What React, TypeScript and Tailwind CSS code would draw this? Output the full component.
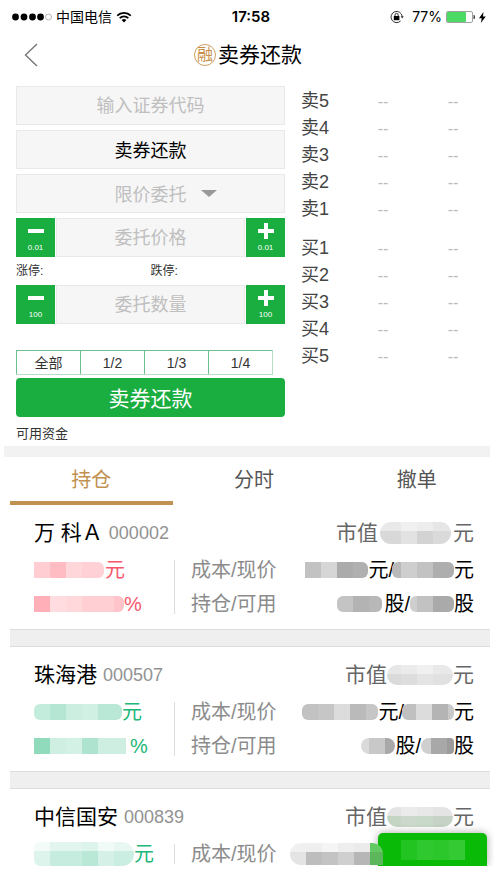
import React, { useState } from 'react';

type Cell = [width: number, color: string];

interface MosaicProps {
  cells: Cell[];
  top?: Cell[];
  height?: number;
  className?: string;
}

// Hides a private amount behind a strip of coloured blocks
const Mosaic: React.FC<MosaicProps> = ({ cells, top, height = 16, className = '' }) => {
  const topHeight = top ? 9 : 0;
  const draw = (row: Cell[], y: number, h: number) => {
    let x = 0;
    return row.map(([w, color], i) => {
      const rect = <rect key={`${y}-${i}`} x={x} y={y} width={w} height={h} fill={color} />;
      x += w;
      return rect;
    });
  };
  const width = cells.reduce((sum, cell) => sum + cell[0], 0);
  return (
    <svg width={width} height={height} shapeRendering="crispEdges" className={`shrink-0 ${className}`} aria-hidden="true">
      {top && draw(top, 0, topHeight)}
      {draw(cells, topHeight, height - topHeight)}
    </svg>
  );
};

const StatusBar: React.FC = () => (
  <div className="grid h-[34px] grid-cols-[1fr_auto_1fr] items-center pr-2 pl-3 font-['Inter','Noto_Sans_CJK_SC',sans-serif] text-sm text-black">
    <div className="flex items-center gap-1">
      <svg width="40" height="8" viewBox="0 0 40 8" aria-hidden="true">
        <circle cx="3.5" cy="4" r="3.4" />
        <circle cx="12" cy="4" r="3.4" />
        <circle cx="20.5" cy="4" r="3.4" />
        <circle cx="28.5" cy="4" r="3.4" />
        <circle cx="36.5" cy="4" r="3" fill="none" stroke="#999" strokeWidth="0.7" />
      </svg>
      <span>中国电信</span>
      <svg width="16" height="12" viewBox="0 0 16 12" fill="none" stroke="#000" strokeWidth="1.8" aria-hidden="true">
        <path d="M1.2 4.6a9.6 9.6 0 0 1 13.6 0" />
        <path d="M3.7 7.2a6.1 6.1 0 0 1 8.6 0" />
        <path d="M5.6 9.1a3.4 3.4 0 0 1 4.8 0L8 11.5z" fill="#000" stroke="none" />
      </svg>
    </div>
    <span className="pl-1 text-[15px] font-semibold">17:58</span>
    <div className="flex items-center justify-end">
      <svg width="14" height="14" viewBox="0 0 14 14" fill="none" stroke="#333" strokeWidth="1" className="mr-2" aria-hidden="true">
        <path d="M10.6 11A5.6 5.6 0 1 1 12.2 6.4" />
        <path d="M10.6 6.2h3.2L12.2 8.4z" fill="#333" stroke="none" />
        <path d="M5 6.3V5a1.6 1.6 0 0 1 3.2 0v1.3" />
        <rect x="3.8" y="6" width="5.6" height="4.2" fill="#000" stroke="none" />
      </svg>
      <span className="mr-1">77%</span>
      <svg width="29" height="12" viewBox="0 0 29 12" aria-hidden="true">
        <rect x="0.5" y="0.5" width="26" height="11" rx="1.5" fill="#fff" stroke="#888" strokeWidth="0.8" />
        <rect x="1" y="1" width="19" height="10" rx="1" fill="#4cd964" />
        <path d="M27.5 4a2 2 0 0 1 0 4z" fill="#444" />
      </svg>
      <svg width="7" height="11" viewBox="0 0 7 11" className="ml-1" aria-hidden="true">
        <path d="M4.5 0L0 6.2h2.8L1.8 11 6.8 4.4H4z" />
      </svg>
    </div>
  </div>
);

const Header: React.FC = () => (
  <header className="grid h-[52px] grid-cols-[1fr_auto_1fr] items-center pb-2.5">
    <button type="button" aria-label="返回" className="ml-6 w-fit">
      <svg width="14" height="24" viewBox="0 0 14 24" fill="none" stroke="#777" strokeWidth="1.4">
        <path d="M13 1L1.5 12 13 23" />
      </svg>
    </button>
    <div className="flex items-center gap-0.5 pl-0.5">
      <span className="flex size-[22px] items-center justify-center rounded-full border border-[#cf9f62] text-base leading-none text-[#c98f49]">融</span>
      <h1 className="text-[21px] leading-7 text-black">卖券还款</h1>
    </div>
  </header>
);

interface StepperProps {
  label: string;
  step: string;
}

const stepButton = 'flex w-[39px] shrink-0 flex-col items-center justify-between bg-[#1aad3f] pt-1 pb-1 text-[8px] leading-[10px] text-white';
const field = 'h-[39px] w-full min-w-0 rounded-none border border-[#e9e9e9] bg-[#f6f6f6] pt-0.5 text-center text-lg placeholder:text-[#bfbfbf]';

const Stepper: React.FC<StepperProps> = ({ label, step }) => (
  <div className="flex h-[39px] gap-px">
    <button type="button" aria-label={`${label}减${step}`} className={stepButton}>
      <svg width="16" height="18" viewBox="0 0 16 18" stroke="#fff" strokeWidth="4">
        <path d="M0 9h16" />
      </svg>
      <span>{step}</span>
    </button>
    <input aria-label={label} placeholder={label} className={field} />
    <button type="button" aria-label={`${label}加${step}`} className={stepButton}>
      <svg width="16" height="18" viewBox="0 0 16 18" stroke="#fff" strokeWidth="4">
        <path d="M0 9h16M8 1v16" />
      </svg>
      <span>{step}</span>
    </button>
  </div>
);

const OrderForm: React.FC = () => (
  <form className="min-w-0 text-[#333]" onSubmit={e => e.preventDefault()}>
    <div className="flex flex-col gap-[5px]">
      <input aria-label="证券代码" placeholder="输入证券代码" className={field} />
      <button type="button" className={`${field} text-black`}>卖券还款</button>
      <div className="relative flex">
        <select aria-label="委托方式" className={`${field} appearance-none text-[#bfbfbf] [text-align-last:center]`}>
          <option>限价委托</option>
        </select>
        <svg width="16" height="7" viewBox="0 0 16 7" className="pointer-events-none absolute top-4 left-1/2 ml-[50px]" aria-hidden="true">
          <path d="M0 0h16L8 7z" fill="#999" />
        </svg>
      </div>
      <Stepper label="委托价格" step="0.01" />
    </div>
    <div className="grid h-7 grid-cols-2 items-center text-xs">
      <span>涨停:</span>
      <span>跌停:</span>
    </div>
    <Stepper label="委托数量" step="100" />
    <div className="mt-[26px] mr-3 grid h-[25px] grid-cols-4 border-t border-r border-b border-t-[#6cc090] border-r-[#b5dfc4] border-b-[#b5dfc4] text-sm">
      {['全部', '1/2', '1/3', '1/4'].map(part => (
        <button key={part} type="button" className="border-l border-[#6cc090] leading-5">{part}</button>
      ))}
    </div>
    <button type="submit" className="mt-[3px] h-[39px] w-full rounded bg-[#1aad3f] pt-0.5 text-[21px] text-white">卖券还款</button>
    <p className="pt-2 pb-[3px] text-[13px] leading-[18px]">可用资金</p>
  </form>
);

const QuoteTable: React.FC<{ rows: string[] }> = ({ rows }) => (
  <table className="w-full table-fixed">
    <tbody>
      {rows.map(row => (
        <tr key={row} className="h-[27px]">
          <th scope="row" className="w-[47px] p-0 text-left text-lg leading-[27px] font-normal whitespace-nowrap text-[#444]">{row}</th>
          <td className="p-0 text-center text-base leading-[27px] text-[#bbb]">--</td>
          <td className="p-0 text-center text-base leading-[27px] text-[#bbb]">--</td>
        </tr>
      ))}
    </tbody>
  </table>
);

interface Holding {
  name: string;
  code: string;
  tone: string;
  marketValue: React.ReactNode;
  profit: React.ReactNode;
  price: React.ReactNode;
  ratio?: React.ReactNode;
  shares?: React.ReactNode;
}

const holdings: Holding[] = [
  {
    // the exchange lists this one with a full-width A
    name: '万 科\uFF21',
    code: '000002',
    tone: 'text-[#f4586a]',
    marketValue: (
      <Mosaic
        height={22}
        className="mr-0.5 ml-0.5 rounded-full"
        top={[[21, '#e9e9e9'], [16, '#f0f0f0'], [16, '#ededed'], [18, '#e6e6e6']]}
        cells={[[21, '#d8d8d8'], [16, '#e2e2e2'], [16, '#d3d3d3'], [18, '#dadada']]}
      />
    ),
    profit: <><Mosaic className="mr-px rounded-r-md" cells={[[16, '#ffcdd2'], [16, '#ffbcc3'], [16, '#ffd6da'], [22, '#ffd1d6']]} />元</>,
    ratio: <><Mosaic className="rounded-r-md" cells={[[16, '#ffafb7'], [16, '#ffdce0'], [16, '#ffd8dc'], [32, '#ffcfd4'], [10, '#ffc3ca']]} />%</>,
    price: (
      <>
        <Mosaic className="rounded-r-md" cells={[[16, '#c2c2c2'], [16, '#d6d6d6'], [16, '#ababab'], [15, '#b0b0b0']]} />元/
        <Mosaic className="-ml-0.5 rounded-md" cells={[[9, '#b9b9b9'], [16, '#cecece'], [16, '#c2c2c2'], [21, '#aeaeae']]} />元
      </>
    ),
    shares: (
      <>
        <Mosaic className="mr-0.5 rounded-md" cells={[[16, '#c4c4c4'], [16, '#b3b3b3'], [13, '#b8b8b8']]} />股/
        <Mosaic className="rounded-md" cells={[[7, '#cecece'], [16, '#c2c2c2'], [21, '#aaaaaa']]} />股
      </>
    ),
  },
  {
    name: '珠海港',
    code: '000507',
    tone: 'text-[#20b778]',
    marketValue: (
      <Mosaic
        height={20}
        className="rounded-full"
        top={[[14, '#e7e7e7'], [16, '#ebebeb'], [16, '#f0f0f0'], [20, '#e9e9e9']]}
        cells={[[14, '#dadada'], [16, '#dddddd'], [16, '#e4e4e4'], [20, '#e1e1e1']]}
      />
    ),
    profit: <><Mosaic className="rounded-md" cells={[[16, '#c4ecdc'], [16, '#b5e6d3'], [16, '#cbeee1'], [16, '#d1f0e4'], [24, '#b9e8d6']]} />元</>,
    ratio: <><Mosaic className="mr-1" cells={[[16, '#8fdbbb'], [16, '#cfefe3'], [16, '#d4f1e6'], [16, '#aee4cf'], [28, '#cdeee1']]} />%</>,
    price: (
      <>
        <Mosaic className="rounded-md" cells={[[16, '#c2c2c2'], [16, '#c6c6c6'], [16, '#dcdcdc'], [16, '#bababa'], [12, '#c6c6c6']]} />元/
        <Mosaic className="-ml-0.5 rounded-md" cells={[[14, '#c0c0c0'], [16, '#dcdcdc'], [16, '#b4b4b4'], [6, '#c9c9c9']]} />元
      </>
    ),
    shares: (
      <>
        <Mosaic className="rounded-lg" cells={[[8, '#dadada'], [16, '#c8c8c8'], [10, '#a9a9a9']]} />股/
        <Mosaic className="rounded-l-lg rounded-r-sm" cells={[[10, '#cfcfcf'], [16, '#a8a8a8'], [7, '#9c9c9c']]} />股
      </>
    ),
  },
  {
    name: '中信国安',
    code: '000839',
    tone: 'text-[#20b778]',
    marketValue: (
      <Mosaic
        height={20}
        className="rounded-full"
        top={[[14, '#e4e4e4'], [16, '#ebebeb'], [16, '#e8e8e8'], [20, '#e4e4e4']]}
        cells={[[14, '#c4d5c4'], [16, '#ccd8cb'], [16, '#c9d9c9'], [20, '#c5d2c5']]}
      />
    ),
    profit: (
      <>
        <Mosaic
          height={24}
          className="rounded-md rounded-r-xl"
          top={[[16, '#f3fbf8'], [32, '#e2f6ef'], [16, '#ddf4ec'], [16, '#f0faf6'], [20, '#e8f7f2']]}
          cells={[[16, '#ddf4ec'], [32, '#c5ecde'], [16, '#b9e8d6'], [16, '#d5f1e7'], [20, '#cbeee2']]}
        />元
      </>
    ),
    price: (
      <Mosaic
        height={22}
        className="relative z-10 mr-[91px] rounded-l-xl rounded-tr-xl"
        top={[[16, '#f0f0f0'], [16, '#efefef'], [16, '#f5f5f5'], [16, '#eeeeee'], [16, '#ebebeb'], [13, '#63ca63']]}
        cells={[[16, '#e4e4e4'], [16, '#bdbdbd'], [16, '#c3c3c3'], [16, '#cfcfcf'], [16, '#b6b6b6'], [13, '#5cb65c']]}
      />
    ),
  },
];

const HoldingCard: React.FC<{ holding: Holding }> = ({ holding }) => (
  <li className="pt-3 pr-4 pb-2 pl-6 last:h-[77px] last:pb-0">
    <div className="flex h-8 items-center justify-between">
      <h2 className="flex items-center gap-1.5 text-[21px] leading-8 whitespace-pre text-black">
        {holding.name}
        <span className="text-lg text-[#929292]">{holding.code}</span>
      </h2>
      <p className="flex items-center text-[21px] text-[#666]">市值{holding.marketValue}元</p>
    </div>
    <div className="flex pt-1 text-xl">
      <div className={`w-[140px] shrink-0 ${holding.tone}`}>
        <p className="flex h-[34px] items-center">{holding.profit}</p>
        {holding.ratio && <p className="flex h-[34px] items-center">{holding.ratio}</p>}
      </div>
      <div className="my-[7px] border-l border-[#ddd]" />
      <dl className="grid flex-1 grid-cols-[auto_1fr] pl-4 text-black">
        <dt className="leading-[34px] text-[#8c8c8c]">成本/现价</dt>
        <dd className="flex h-[34px] items-center justify-end">{holding.price}</dd>
        {holding.shares && (
          <>
            <dt className="leading-[34px] text-[#8c8c8c]">持仓/可用</dt>
            <dd className="flex h-[34px] items-center justify-end">{holding.shares}</dd>
          </>
        )}
      </dl>
    </div>
  </li>
);

const App: React.FC = () => {
  const [tab, setTab] = useState('持仓');

  return (
    <div className="overflow-hidden bg-white font-['Liberation_Sans','Noto_Sans_CJK_SC',sans-serif]">
      <StatusBar />
      <Header />
      <main>
        <section className="grid grid-cols-[1fr_193px] gap-4 pl-4">
          <OrderForm />
          <div className="flex flex-col gap-3 pt-0.5 pr-1.5">
            <QuoteTable rows={['卖5', '卖4', '卖3', '卖2', '卖1']} />
            <QuoteTable rows={['买1', '买2', '买3', '买4', '买5']} />
          </div>
        </section>
        <div className="mx-1 h-[11px] bg-[#f2f2f2]" />
        <nav className="-mr-1 ml-2.5 grid grid-cols-3">
          {['持仓', '分时', '撤单'].map(name => (
            <button
              key={name}
              type="button"
              onClick={() => setTab(name)}
              className={`h-12 border-b-4 pt-0.5 text-xl ${tab === name ? 'border-[#c19152] text-[#c19152]' : 'border-transparent text-[#555]'}`}
            >
              {name}
            </button>
          ))}
        </nav>
        <div className="relative overflow-hidden">
          <ul className="mr-1 ml-2.5">
            {holdings.map((holding, i) => (
              <React.Fragment key={holding.code}>
                {i > 0 && <li aria-hidden="true" className="h-[18px] border-y border-[#dcdcdc] bg-[#efefef]" />}
                <HoldingCard holding={holding} />
              </React.Fragment>
            ))}
          </ul>
          <div className="absolute right-[7px] bottom-0 flex h-[33px] w-[109px] items-center justify-center rounded-t-[5px] bg-[#09bb07] shadow-[0_0_8px_rgba(0,0,0,0.35)]">
            <Mosaic height={20} cells={[[16, '#22c422'], [16, '#2fc92f'], [16, '#2bc72b'], [16, '#33ca33']]} />
          </div>
        </div>
      </main>
    </div>
  );
};

export default App;
